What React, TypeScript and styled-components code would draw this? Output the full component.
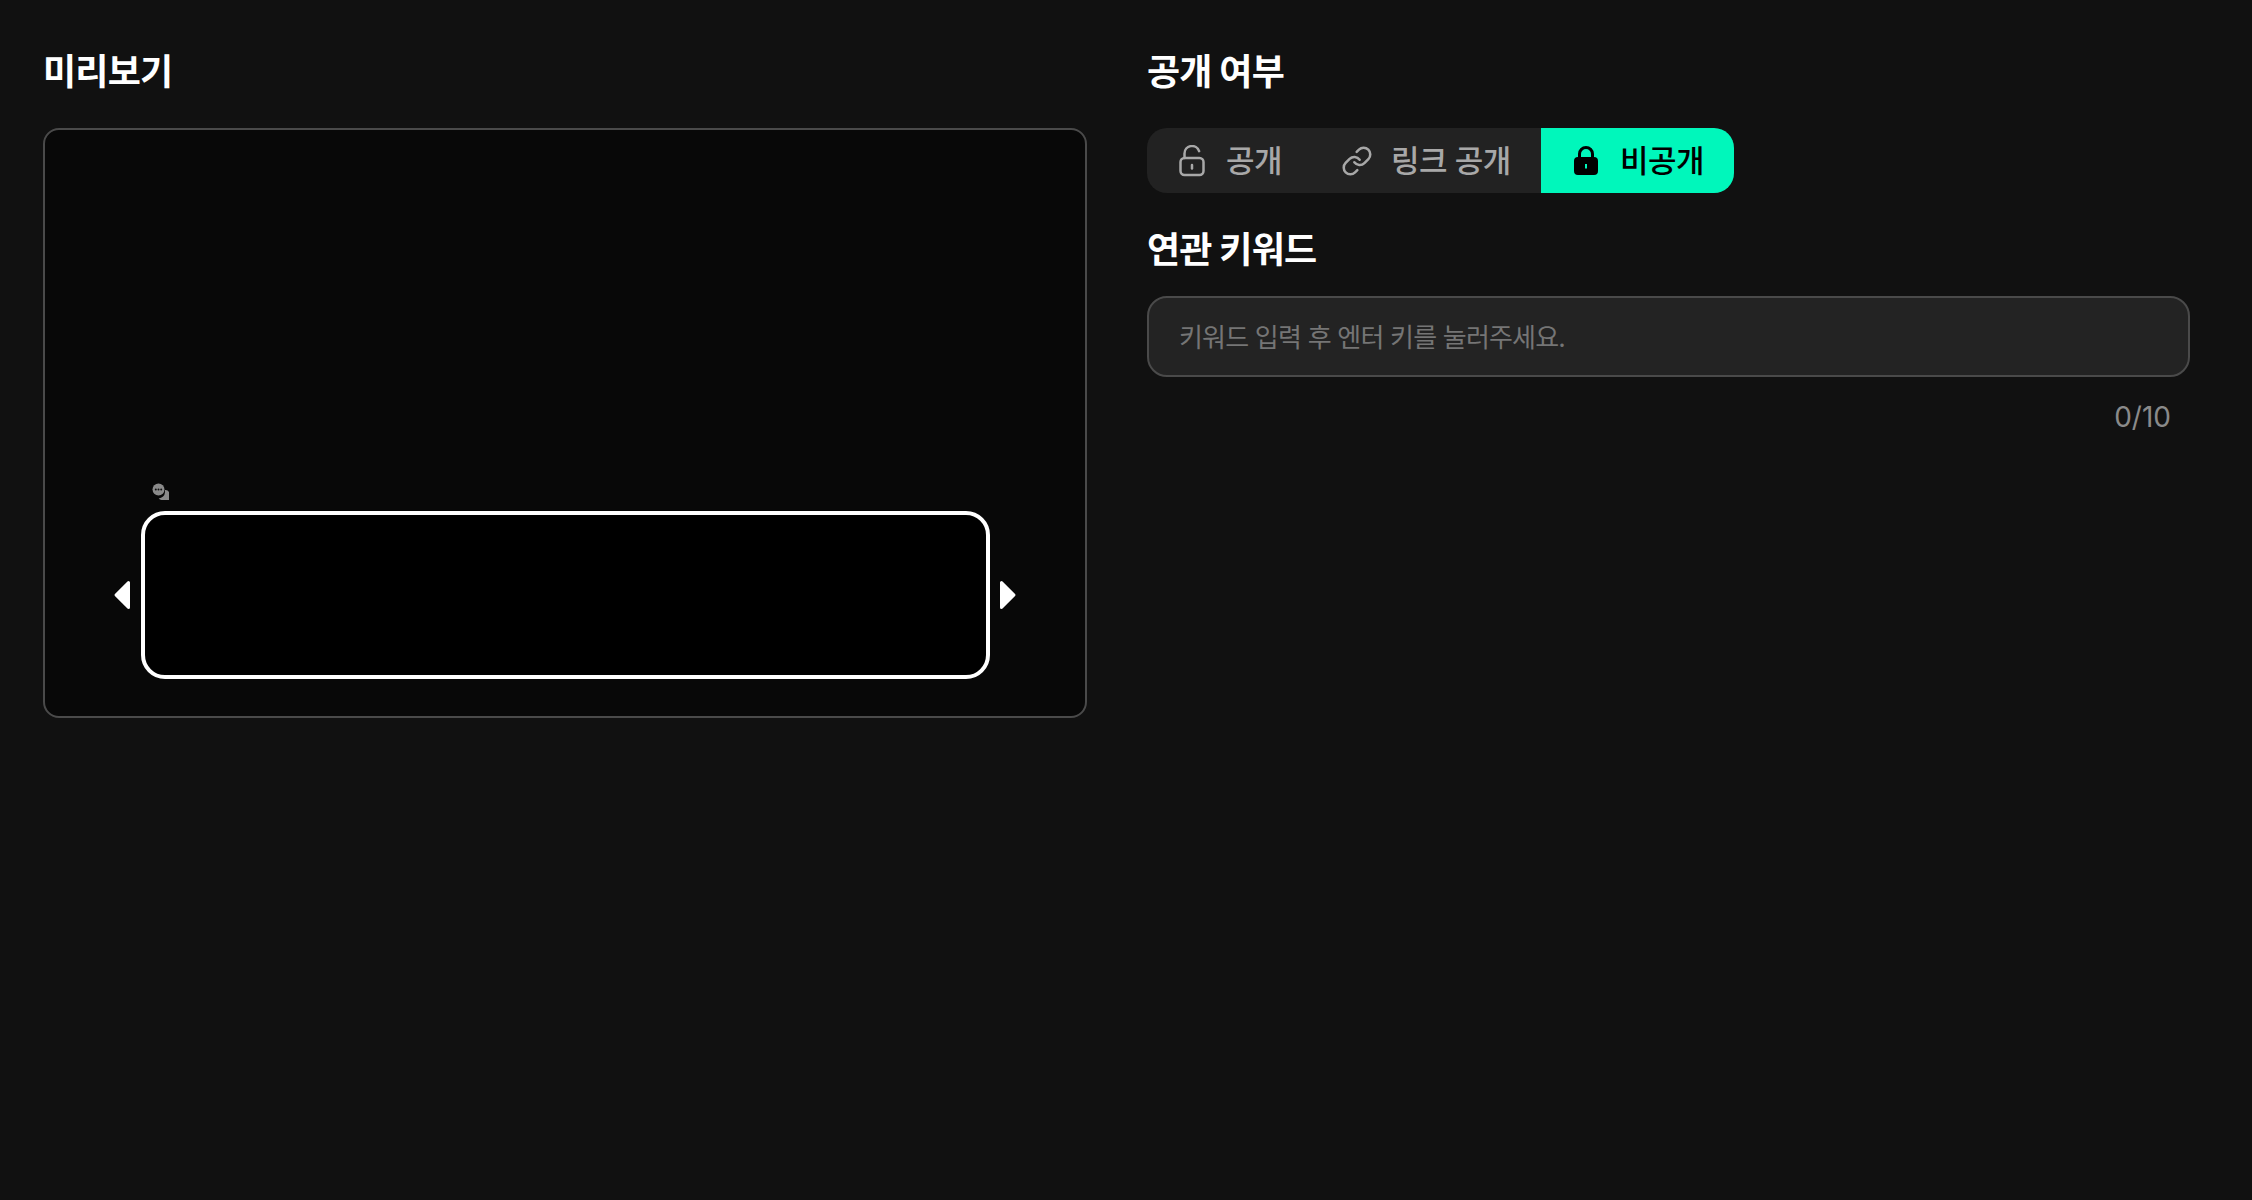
import { FunctionComponent } from "react";
import styled, { createGlobalStyle } from "styled-components";

const GlobalStyle = createGlobalStyle`
  html, body {
    margin: 0;
    padding: 0;
    background: #111111;
  }
  body {
    font-family: Inter, "Noto Sans CJK KR", sans-serif;
  }
  * {
    box-sizing: border-box;
  }
`;

const Page = styled.div`
  display: grid;
  grid-template-columns: 1044px 1043px;
  column-gap: 60px;
  align-items: start;
  min-height: 1200px;
  padding: 48px 0 0 43px;
  background: #111111;
`;

const Column = styled.section`
  display: flex;
  flex-direction: column;
`;

const Title = styled.h2`
  margin: 0;
  height: 48px;
  color: #ffffff;
  font-size: 36px;
  line-height: 48px;
  font-weight: 700;
  letter-spacing: -0.8px;
`;

const PreviewBox = styled.div`
  display: flex;
  flex-direction: column;
  align-items: center;
  justify-content: flex-end;
  height: 590px;
  margin-top: 32px;
  padding-bottom: 37px;
  background: #080808;
  border: 2px solid #4a4a4a;
  border-radius: 16px;
`;

const CaptionIcon = styled.div`
  display: flex;
  width: 849px;
  height: 28px;
  padding-left: 11px;
  color: #8a8a8a;
`;

const SlideRow = styled.div`
  display: flex;
  align-items: center;
  gap: 11px;
`;

const SlideFrame = styled.div`
  width: 849px;
  height: 168px;
  background: #000000;
  border: 4px solid #ffffff;
  border-radius: 24px;
`;

const Toggle = styled.div`
  display: flex;
  align-self: flex-start;
  height: 65px;
  margin-top: 32px;
  overflow: hidden;
  background: #222222;
  border-radius: 20px;
`;

const ToggleItem = styled.div<{ $active?: boolean }>`
  display: flex;
  align-items: center;
  gap: 18px;
  padding: 0 30px 0 29px;
  background: ${(p) => (p.$active ? "#00f7bb" : "transparent")};
  color: ${(p) => (p.$active ? "#000000" : "#a8a8a8")};
  font-size: 31px;
  font-weight: 500;
  letter-spacing: -0.5px;
  white-space: nowrap;
`;

const ToggleLabel = styled.span`
  padding-bottom: 5px;
`;

const KeywordTitle = styled(Title)`
  margin-top: 33px;
`;

const KeywordInput = styled.div`
  display: flex;
  align-items: center;
  height: 81px;
  margin-top: 22px;
  padding: 0 30px 3px;
  background: #232323;
  border: 2px solid #4a4a4a;
  border-radius: 20px;
  color: #757575;
  font-size: 26px;
  letter-spacing: -0.8px;
`;

const Counter = styled.div`
  margin-top: 20px;
  padding-right: 19px;
  color: #8a8a8a;
  font-size: 28px;
  line-height: 40px;
  text-align: right;
`;

const OpenLockIcon = () => (
  <svg width="32" height="32" viewBox="0 0 32 32" fill="none" stroke="currentColor" strokeWidth="2.5">
    <rect x="4.5" y="13" width="23" height="17" rx="4" />
    <path d="M8.5 13V8.5a7.5 7.5 0 0 1 14.6-2.4" strokeLinecap="round" />
    <path d="M16 20v3.5" strokeLinecap="round" />
  </svg>
);

const LinkIcon = () => (
  <svg width="32" height="32" viewBox="0 0 24 24" fill="none" stroke="currentColor" strokeWidth="1.9" strokeLinecap="round" strokeLinejoin="round">
    <path d="M10 13a5 5 0 0 0 7.54.54l3-3a5 5 0 0 0-7.07-7.07l-1.72 1.71" />
    <path d="M14 11a5 5 0 0 0-7.54-.54l-3 3a5 5 0 0 0 7.07 7.07l1.71-1.71" />
  </svg>
);

const LockIcon = () => (
  <svg width="32" height="32" viewBox="0 0 32 32">
    <path
      fill="currentColor"
      fillRule="evenodd"
      d="M8 12V9a8 8 0 0 1 16 0v3a4 4 0 0 1 4 4v10a4 4 0 0 1-4 4H8a4 4 0 0 1-4-4V16a4 4 0 0 1 4-4zM11 12h10V9a5 5 0 0 0-10 0v3zM15 19v4.5h2V19h-2z"
    />
  </svg>
);

const ChatIcon = () => (
  <svg width="18" height="18" viewBox="0 0 18 18">
    <path fill="currentColor" d="M17 9v8H9.5a4 4 0 0 1-2.8-1.6A6.5 6.5 0 0 0 13 9.3a6 6 0 0 0-.1-2.2A4 4 0 0 1 17 9z" />
    <circle cx="6.5" cy="6.5" r="6" fill="currentColor" />
    <circle cx="3.8" cy="6.5" r="1" fill="#111111" />
    <circle cx="6.5" cy="6.5" r="1" fill="#111111" />
    <circle cx="9.2" cy="6.5" r="1" fill="#111111" />
  </svg>
);

const ArrowIcon: FunctionComponent<{ left?: boolean }> = ({ left }) => (
  <svg width="15" height="30" viewBox="0 0 15 30" overflow="visible">
    <path
      fill="#ffffff"
      stroke="#ffffff"
      strokeWidth="3"
      strokeLinejoin="round"
      d={left ? "M13.5 2.5v25L1 15z" : "M0.5 2.5v25L13 15z"}
    />
  </svg>
);

const App: FunctionComponent = () => {
  return (
    <Page>
      <GlobalStyle />
      <Column>
        <Title>미리보기</Title>
        <PreviewBox>
          <CaptionIcon>
            <ChatIcon />
          </CaptionIcon>
          <SlideRow>
            <ArrowIcon left />
            <SlideFrame />
            <ArrowIcon />
          </SlideRow>
        </PreviewBox>
      </Column>
      <Column>
        <Title>공개 여부</Title>
        <Toggle>
          <ToggleItem>
            <OpenLockIcon />
            <ToggleLabel>공개</ToggleLabel>
          </ToggleItem>
          <ToggleItem>
            <LinkIcon />
            <ToggleLabel>링크 공개</ToggleLabel>
          </ToggleItem>
          <ToggleItem $active>
            <LockIcon />
            <ToggleLabel>비공개</ToggleLabel>
          </ToggleItem>
        </Toggle>
        <KeywordTitle>연관 키워드</KeywordTitle>
        <KeywordInput>키워드 입력 후 엔터 키를 눌러주세요.</KeywordInput>
        <Counter>0/10</Counter>
      </Column>
    </Page>
  );
};

export default App;
